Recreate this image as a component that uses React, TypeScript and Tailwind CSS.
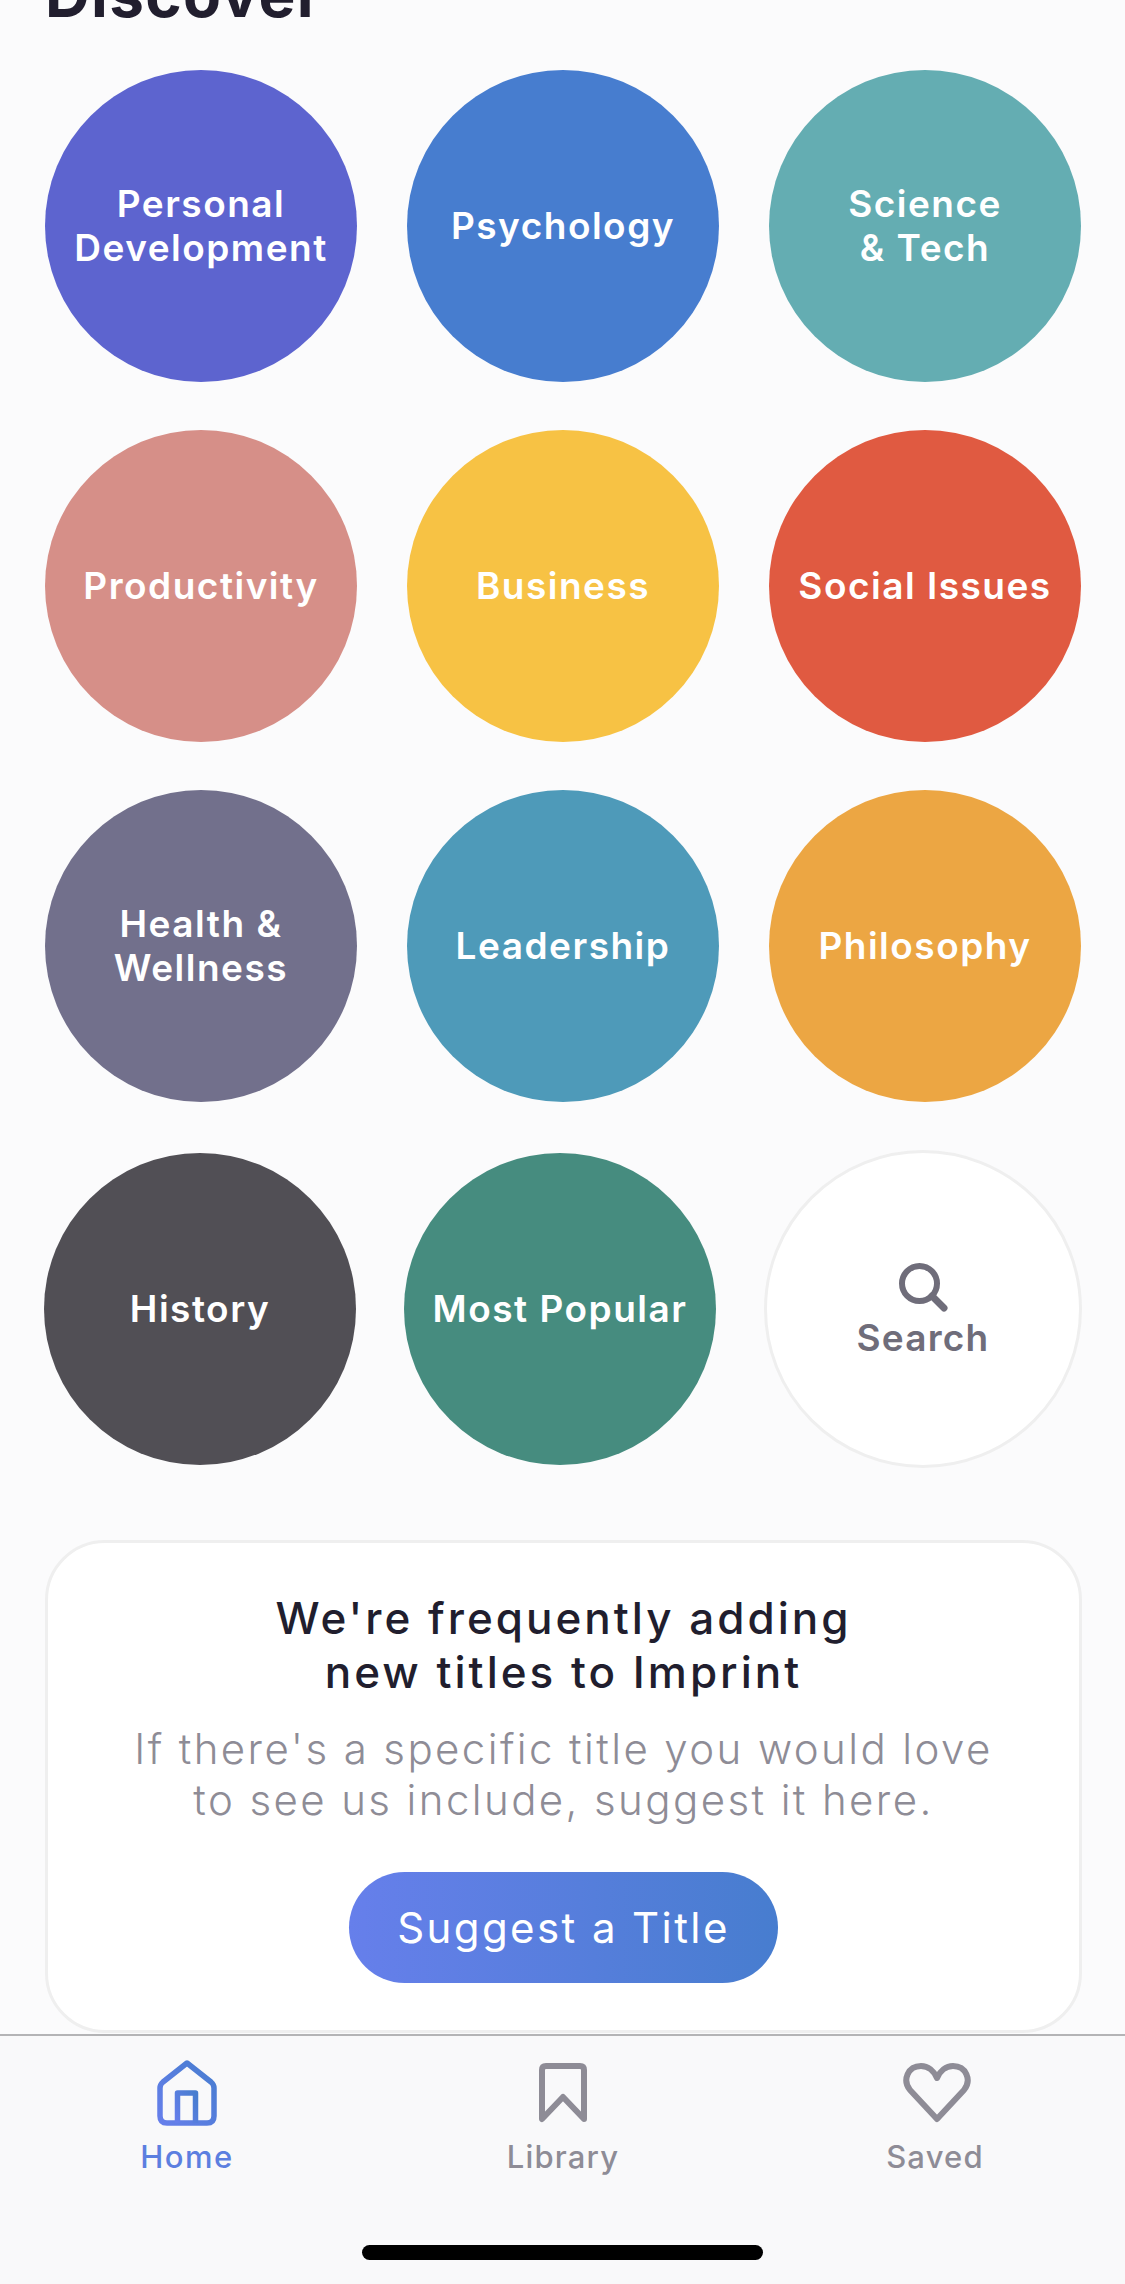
const font = "font-['Inter','Liberation_Sans',sans-serif]";

function Circle({ bg, lines }: { bg: string; lines: string[] }) {
  return (
    <div className={`flex h-[312px] w-[312px] shrink-0 flex-col items-center justify-center rounded-full text-center text-[37px] leading-[44px] font-semibold tracking-[1.5px] text-white ${bg}`}>
      {lines.map((l) => (
        <span key={l}>{l}</span>
      ))}
    </div>
  );
}

function HomeIcon() {
  return (
    <svg width="60" height="66" viewBox="0 0 60 66" fill="none">
      <defs>
        <linearGradient id="hg" x1="0" y1="1" x2="1" y2="0">
          <stop offset="0" stopColor="#667feb" />
          <stop offset="1" stopColor="#477dcf" />
        </linearGradient>
      </defs>
      <path
        d="M30 3 L54 22 Q57 24.5 57 28 L57 56 Q57 63 50 63 L10 63 Q3 63 3 56 L3 28 Q3 24.5 6 22 Z"
        stroke="url(#hg)"
        strokeWidth="5.5"
        strokeLinejoin="round"
      />
      <path d="M20.5 63 L20.5 33 L38.5 33 L38.5 63" stroke="url(#hg)" strokeWidth="5.5" strokeLinejoin="round" />
    </svg>
  );
}

function BookmarkIcon() {
  return (
    <svg width="48" height="60" viewBox="0 0 48 60" fill="none">
      <path
        d="M3 56 L3 7 Q3 3 7 3 L41 3 Q45 3 45 7 L45 56 L24 34 Z"
        stroke="#8e8c96"
        strokeWidth="6"
        strokeLinejoin="round"
      />
    </svg>
  );
}

function HeartIcon() {
  return (
    <svg width="68" height="60" viewBox="0 0 68 60" fill="none">
      <path
        d="M34 56 L7 27 C-1 17 5 3 18 3 C25 3 31 8 34 15 C37 8 43 3 50 3 C63 3 69 17 61 27 Z"
        stroke="#8e8c96"
        strokeWidth="6"
        strokeLinejoin="round"
      />
    </svg>
  );
}

function SearchIcon() {
  return (
    <svg width="50" height="50" viewBox="0 0 50 50" fill="none">
      <circle cx="20.5" cy="20.5" r="17.5" stroke="#6f6d7a" strokeWidth="6" />
      <path d="M33 33 L45 45" stroke="#6f6d7a" strokeWidth="7" strokeLinecap="round" />
    </svg>
  );
}

export default function App() {
  return (
    <div className={`flex h-[2284px] w-[1125px] flex-col overflow-hidden bg-[#fbfbfc] ${font}`}>
      <div className="flex flex-1 flex-col">
        <h1 className="mt-[-41px] ml-[45px] h-[64px] text-[62px] leading-[72px] font-bold tracking-[1.3px] text-[#211e2e]">Discover</h1>
        <div className="mt-[47px] ml-[45px] flex gap-[50px]">
          <Circle bg="bg-[#5d64cf]" lines={["Personal", "Development"]} />
          <Circle bg="bg-[#477dcf]" lines={["Psychology"]} />
          <Circle bg="bg-[#64adb2]" lines={["Science", "& Tech"]} />
        </div>
        <div className="mt-[48px] ml-[45px] flex gap-[50px]">
          <Circle bg="bg-[#d68f88]" lines={["Productivity"]} />
          <Circle bg="bg-[#f7c244]" lines={["Business"]} />
          <Circle bg="bg-[#e05a41]" lines={["Social Issues"]} />
        </div>
        <div className="mt-[48px] ml-[45px] flex gap-[50px]">
          <Circle bg="bg-[#72708c]" lines={["Health &", "Wellness"]} />
          <Circle bg="bg-[#4e9ab9]" lines={["Leadership"]} />
          <Circle bg="bg-[#eca643]" lines={["Philosophy"]} />
        </div>
        <div className="mt-[48px] ml-[44px] flex items-center gap-[48px]">
          <Circle bg="bg-[#514f55]" lines={["History"]} />
          <div className="flex items-center gap-[48px]">
            <Circle bg="bg-[#468c7f]" lines={["Most Popular"]} />
            <div className="flex h-[318px] w-[318px] shrink-0 flex-col items-center justify-center rounded-full border-[3px] border-[#efefef] bg-white text-[37px] leading-[44px] font-semibold tracking-[1.2px] text-[#6f6d7a]">
              <div className="mt-[5px] ml-[2px]">
                <SearchIcon />
              </div>
              <span className="mt-[3px]">Search</span>
            </div>
          </div>
        </div>
        <div className="mt-[72px] mr-[43px] ml-[45px] flex h-[493px] flex-col items-center rounded-[60px] border-[3px] border-[#efefef] bg-white pt-[48px] text-center">
          <div className="text-[44px] leading-[54px] font-medium tracking-[3px] text-[#211e2e]">
            <div>We're frequently adding</div>
            <div>new titles to Imprint</div>
          </div>
          <div className="mt-[24px] text-[42px] leading-[51px] font-light tracking-[2.4px] text-[#8e8c96]">
            <div>If there's a specific title you would love</div>
            <div>to see us include, suggest it here.</div>
          </div>
          <button className="mt-[47px] flex h-[111px] w-[429px] items-center justify-center rounded-full bg-gradient-to-r from-[#667feb] to-[#477dcf] text-[42px] font-normal tracking-[2.4px] text-white">
            Suggest a Title
          </button>
        </div>
      </div>
      <nav className="flex h-[250px] flex-col border-t-[2px] border-[#b4b4b6] bg-[#f9f9fa]">
        <div className="ml-[87px] flex">
          <div className="flex w-[200px] flex-col items-center pt-[24px] text-[31px] leading-[36px] font-medium tracking-[1.5px] text-[#5c7fe0]">
            <HomeIcon />
            <span className="mt-[13px]">Home</span>
          </div>
          <div className="ml-[176px] flex w-[200px] flex-col items-center pt-[27px] text-[31px] leading-[36px] font-medium tracking-[1.2px] text-[#8e8c96]">
            <BookmarkIcon />
            <span className="mt-[16px]">Library</span>
          </div>
          <div className="ml-[172px] flex w-[200px] flex-col items-center pt-[27px] text-[31px] leading-[36px] font-medium tracking-[1.2px] text-[#8e8c96]">
            <div className="ml-[3px]">
              <HeartIcon />
            </div>
            <span className="mt-[16px]">Saved</span>
          </div>
        </div>
        <div className="mx-auto mt-[70px] h-[15px] w-[401px] rounded-full bg-black" />
      </nav>
    </div>
  );
}
